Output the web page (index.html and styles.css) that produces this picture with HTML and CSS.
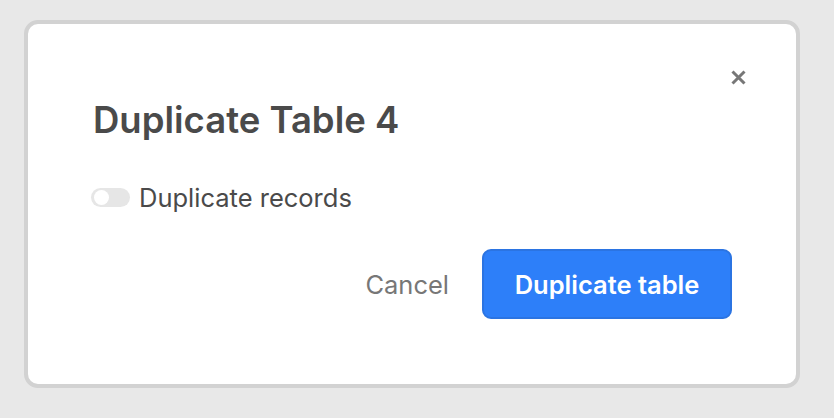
FILE: index.html
```html
<!DOCTYPE html>
<html>
<head>
<meta charset="utf-8">
<link rel="stylesheet" href="styles.css">
</head>
<body>
<div class="dialog">
  <div class="top">
    <button class="close" aria-label="Close">
      <svg width="15" height="15" viewBox="0 0 15 15"><path d="M1.5 1.5 L13.5 13.5 M13.5 1.5 L1.5 13.5" stroke="#777" stroke-width="3" stroke-linecap="butt"/></svg>
    </button>
  </div>
  <h1 class="title">Duplicate Table 4</h1>
  <label class="option">
    <span class="toggle"><span class="knob"></span></span>
    <span class="option-text">Duplicate records</span>
  </label>
  <div class="actions">
    <button class="cancel">Cancel</button>
    <button class="primary">Duplicate table</button>
  </div>
</div>
</body>
</html>
```
FILE: styles.css
```css
html, body {
  margin: 0;
  padding: 0;
  background: #e8e8e8;
}
body {
  padding: 20px 34px 30px 24px;
  font-family: Inter, "Liberation Sans", sans-serif;
  color: #4a4a4a;
}
.dialog {
  box-sizing: border-box;
  width: 776px;
  height: 368px;
  background: #fff;
  border: 4px solid #d2d2d2;
  border-radius: 14px;
  padding: 0 64px 0 65px;
  display: flex;
  flex-direction: column;
}
.top {
  display: flex;
  justify-content: flex-end;
  padding-top: 46px;
  height: 15px;
}
.close {
  border: 0;
  background: none;
  padding: 0;
  width: 15px;
  height: 15px;
  margin-right: -14px;
  display: block;
  cursor: pointer;
}
.close svg { display: block; }
.title {
  margin: 15px 0 0 0;
  font-size: 36.5px;
  line-height: 40px;
  font-weight: 600;
  color: #4a4a4a;
}
.option {
  display: flex;
  align-items: center;
  margin-top: 42px;
  height: 30px;
}
.toggle {
  box-sizing: border-box;
  width: 39px;
  height: 19px;
  border-radius: 10px;
  background: #e6e6e6;
  padding: 2px 3px;
  display: flex;
  align-items: center;
  margin-left: -2px;
  margin-right: 9px;
}
.knob {
  flex: 0 0 15px;
  width: 15px;
  height: 15px;
  border-radius: 50%;
  background: #fff;
}
.option-text {
  font-size: 25.5px;
  color: #4a4a4a;
}
.actions {
  display: flex;
  justify-content: flex-end;
  align-items: center;
  gap: 33px;
  margin-top: 37px;
}
.cancel {
  border: 0;
  background: none;
  font-family: inherit;
  font-size: 25.5px;
  color: #777;
  padding: 0;
}
.primary {
  box-sizing: border-box;
  width: 250px;
  height: 70px;
  border-radius: 9px;
  background: #2d7ff9;
  border: 2px solid #2b74e2;
  color: #fff;
  font-family: inherit;
  font-size: 25.5px;
  font-weight: 600;
  padding: 0;
}
```
